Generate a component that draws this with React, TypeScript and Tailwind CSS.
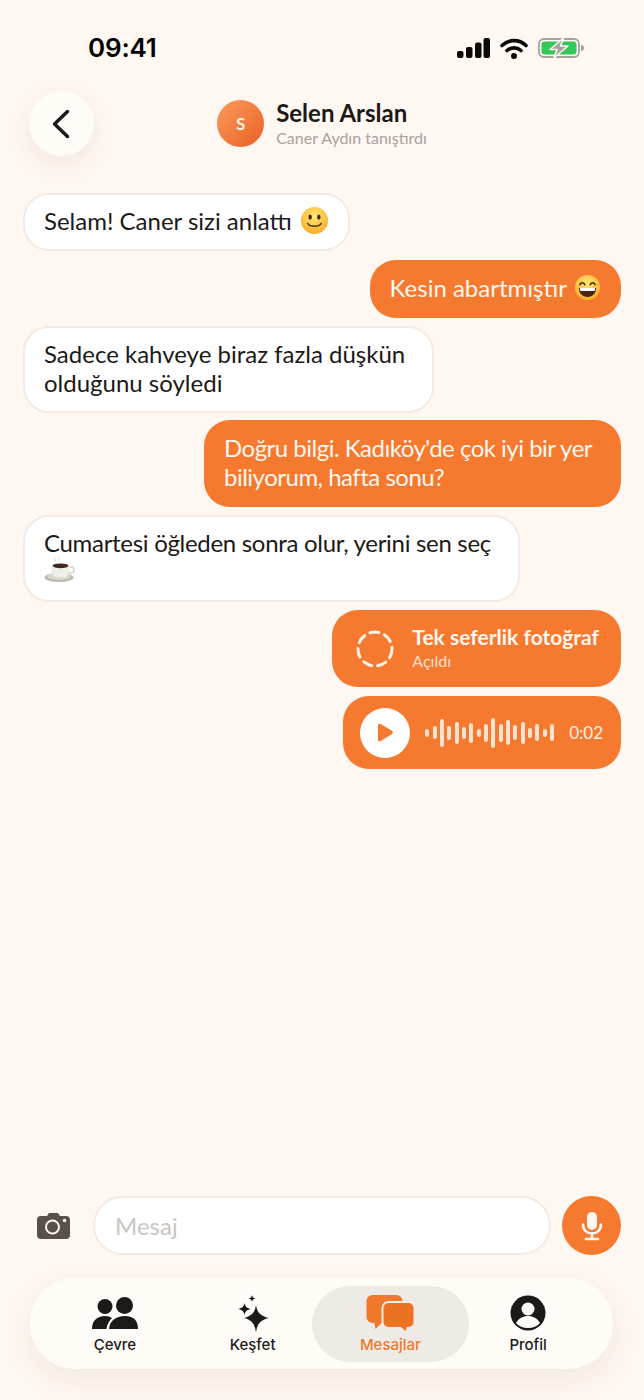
const WAVE = [8, 13, 28, 14, 22, 12, 20, 8, 18, 30, 18, 25, 15, 22, 10, 17, 8, 17];

function Smile({ size = 29 }: { size?: number }) {
  return (
    <svg width={size} height={size} viewBox="0 0 30 30" className="inline-block shrink-0 align-middle">
      <defs>
        <radialGradient id="smileFace" cx="50%" cy="35%" r="70%">
          <stop offset="0%" stopColor="#ffe873" />
          <stop offset="100%" stopColor="#f7a823" />
        </radialGradient>
      </defs>
      <circle cx="15" cy="15" r="14" fill="url(#smileFace)" />
      <ellipse cx="10.5" cy="11.5" rx="1.8" ry="2.6" fill="#3b2a1a" />
      <ellipse cx="19.5" cy="11.5" rx="1.8" ry="2.6" fill="#3b2a1a" />
      <path d="M8 18c2 4 12 4 14 0" fill="none" stroke="#5a3a1a" strokeWidth="1.5" strokeLinecap="round" />
    </svg>
  );
}

function Grin({ size = 27 }: { size?: number }) {
  return (
    <svg width={size} height={size} viewBox="0 0 30 30" className="inline-block shrink-0 align-middle">
      <defs>
        <radialGradient id="grinFace" cx="50%" cy="35%" r="70%">
          <stop offset="0%" stopColor="#ffe873" />
          <stop offset="100%" stopColor="#f7a823" />
        </radialGradient>
      </defs>
      <circle cx="15" cy="15" r="14" fill="url(#grinFace)" />
      <path d="M6.5 12c1-3 4.500-3 5.500 0M18 12c1-3 4.500-3 5.500 0" fill="none" stroke="#3b2a1a" strokeWidth="1.7" strokeLinecap="round" />
      <path d="M5.500 15.500h19c0 6-4 10-9.500 10s-9.500-4-9.500-10z" fill="#4a2410" />
      <path d="M6.500 15.500h17c0 1.500-.3 2.500-.7 3.500H7.200c-.4-1-.7-2-.7-3.500z" fill="#fff" />
    </svg>
  );
}

function Coffee() {
  return (
    <div className="h-[29px]">
      <svg width="31" height="26" viewBox="0 0 31 26" className="block">
        <path d="M11 1c-1.500 1.500 1.500 2.500 0 4M15 0c-1.500 1.500 1.500 2.500 0 4" fill="none" stroke="#e3e3e3" strokeWidth="1" />
        <ellipse cx="15" cy="20.500" rx="14.500" ry="4.500" fill="#b9b7ae" />
        <ellipse cx="15" cy="19.500" rx="12" ry="3.500" fill="#d8d6cd" />
        <path d="M7 8h19c0 6-1.500 11-5 12.500h-9C8.500 19 7 14 7 8z" fill="#efeee9" />
        <path d="M25.500 10h1.500a2.500 2.500 0 010 6h-2.500" fill="none" stroke="#d6d4cc" strokeWidth="1.600" />
        <ellipse cx="16.500" cy="8.500" rx="9.500" ry="3.300" fill="#f7f6f2" />
        <ellipse cx="16.500" cy="8.800" rx="7.800" ry="2.400" fill="#3f2a1d" />
      </svg>
    </div>
  );
}

function StatusBar() {
  return (
    <div className="flex h-[91px] items-start justify-between pl-[88px] pr-[59px] pt-[32px]">
      <span className="font-['Inter',sans-serif] text-[26px] font-semibold leading-[32px] tracking-[-0.2px] text-black">09:41</span>
      <div className="flex items-center gap-[10px] pt-[5px]">
        <svg width="33" height="21" viewBox="0 0 33 21" fill="#0c0a09">
          <rect x="0" y="13" width="6.500" height="7" rx="2" />
          <rect x="9" y="9" width="6.500" height="11" rx="2" />
          <rect x="18" y="4.500" width="6.500" height="15.500" rx="2" />
          <rect x="26.500" y="0" width="6.500" height="20" rx="2" />
        </svg>
        <svg width="28" height="21" viewBox="0 0 28 21" fill="none" stroke="#0c0a09" strokeWidth="3.600" strokeLinecap="round">
          <path d="M2 7.500c7-6.500 17-6.500 24 0" />
          <path d="M7 12.500c4-3.500 10-3.500 14 0" />
          <circle cx="14" cy="18" r="1.200" fill="#0c0a09" />
        </svg>
        <svg width="47" height="22" viewBox="0 0 47 22">
          <rect x="1" y="2" width="40" height="18" rx="5" fill="none" stroke="#a8a29e" strokeWidth="1.800" />
          <rect x="3.500" y="4.500" width="35" height="13" rx="3" fill="#34c759" />
          <path d="M43 8v6c2 0 3-1 3-3s-1-3-3-3z" fill="#a8a29e" />
          <path d="M25.500 1L12 12.500h7L16 21l14-12h-7.500z" fill="#a8a29e" stroke="#fff7f1" strokeWidth="1.600" strokeLinejoin="round" />
        </svg>
      </div>
    </div>
  );
}

function Header() {
  return (
    <div className="grid grid-cols-[65px_1fr_65px] items-center px-[29px]">
      <button className="flex h-[65px] w-[65px] items-center justify-center rounded-full bg-[#fffcf8] shadow-[0_8px_24px_rgba(90,60,30,0.08)]">
        <svg width="20" height="32" viewBox="0 0 20 32" fill="none" stroke="#1c1917" strokeWidth="3.500" strokeLinecap="round" strokeLinejoin="round">
          <path d="M15.500 3.500L2.500 16l13 12.500" />
        </svg>
      </button>
      <div className="flex items-center justify-center gap-[12px]">
        <div className="flex h-[47px] w-[47px] items-center justify-center rounded-full bg-gradient-to-br from-[#fb9a5c] to-[#e9601f] text-[17px] font-bold text-[#fff3e8]">
          S
        </div>
        <div>
          <div className="text-[24px] font-bold leading-[28px] text-[#1c1917]">Selen Arslan</div>
          <div className="mt-[1px] text-[16px] leading-[20px] text-[#a8a29e]">Caner Aydın tanıştırdı</div>
        </div>
      </div>
      <div />
    </div>
  );
}

function Incoming({ children, className = "" }: { children: React.ReactNode; className?: string }) {
  return (
    <div className={`self-start rounded-[26px] border-2 border-[#f5ebe3] bg-white px-[19px] pb-[14px] pt-[11px] text-[24px] leading-[29px] text-[#1c1917] ${className}`}>
      {children}
    </div>
  );
}

function Outgoing({ children, className = "" }: { children: React.ReactNode; className?: string }) {
  return (
    <div className={`self-end rounded-[26px] bg-[#f57a30] px-[20px] pb-[16px] pt-[13px] text-[24px] leading-[29px] text-[#fff7f0] ${className}`}>
      {children}
    </div>
  );
}

function Messages() {
  return (
    <div className="flex flex-col gap-[8px] px-[23px] pt-[37px]">
      <Incoming>
        <span className="flex items-center gap-[8px]">
          Selam! Caner sizi anlattı <Smile />
        </span>
      </Incoming>
      <Outgoing className="mt-[1px]">
        <span className="flex items-center gap-[7px]">
          Kesin abartmıştır <Grin />
        </span>
      </Outgoing>
      <Incoming>
        <div className="w-[369px]">Sadece kahveye biraz fazla düşkün olduğunu söyledi</div>
      </Incoming>
      <Outgoing className="-mt-[1px]">
        <div className="w-[377px] tracking-[-0.5px]">Doğru bilgi. Kadıköy'de çok iyi bir yer biliyorum, hafta sonu?</div>
      </Outgoing>
      <Incoming>
        <div className="w-[455px] tracking-[-0.3px]">
          Cumartesi öğleden sonra olur, yerini sen seç
          <Coffee />
        </div>
      </Incoming>
      <div className="flex h-[77px] items-center gap-[18px] self-end rounded-[26px] bg-[#f57a30] pl-[24px] pr-[22px]">
        <svg width="38" height="38" viewBox="0 0 38 38" fill="none" stroke="#fff3e8" strokeWidth="3" strokeDasharray="9 5.900" strokeLinecap="round">
          <circle cx="19" cy="19" r="17" />
        </svg>
        <div className="pb-[2px]">
          <div className="text-[21px] font-bold leading-[26px] text-[#fff7f0]">Tek seferlik fotoğraf</div>
          <div className="text-[16px] leading-[22px] text-[#fde0c8]">Açıldı</div>
        </div>
      </div>
      <div className="mt-[1px] flex h-[73px] items-center self-end rounded-[26px] bg-[#f57a30] pl-[17px] pr-[18px]">
        <div className="flex h-[50px] w-[50px] items-center justify-center rounded-full bg-white">
          <svg width="20" height="22" viewBox="0 0 20 22" fill="#f57a30">
            <path d="M3 3.500c0-1.500 1.500-2.300 2.800-1.600l11 6.800c1.300.8 1.300 2.700 0 3.500l-11 6.800c-1.300.7-2.800-.1-2.800-1.600z" />
          </svg>
        </div>
        <div className="ml-[15px] flex items-center gap-[3.350px]">
          {WAVE.map((h, i) => (
            <span key={i} className="w-[4px] rounded-full bg-[#fde3cf]" style={{ height: h }} />
          ))}
        </div>
        <span className="ml-[15px] text-[17px] text-[#fff0e4]">0:02</span>
      </div>
    </div>
  );
}

function Composer() {
  return (
    <div className="flex items-center pl-[37px] pr-[23px]">
      <svg width="33" height="27" viewBox="0 0 33 27" className="shrink-0">
        <path d="M4 4h6l2-3h9l2 3h6a4 4 0 014 4v15a4 4 0 01-4 4H4a4 4 0 01-4-4V8a4 4 0 014-4z" fill="#57504b" />
        <circle cx="15.500" cy="15" r="6.500" fill="none" stroke="#fff7f1" strokeWidth="2" />
        <circle cx="27.500" cy="8.500" r="1.800" fill="#fff7f1" />
      </svg>
      <div className="ml-[23px] flex h-[59px] flex-1 items-center rounded-full border-2 border-[#f5ebe3] bg-white pl-[20px] text-[24px] text-[#c9c7c4]">
        Mesaj
      </div>
      <div className="ml-[11px] flex h-[59px] w-[59px] shrink-0 items-center justify-center rounded-full bg-[#f57a30]">
        <svg width="22" height="30" viewBox="0 0 22 30" fill="none" stroke="#fff7f1" strokeWidth="2.600" strokeLinecap="round">
          <rect x="6" y="1" width="10" height="18" rx="5" fill="#fff7f1" stroke="none" />
          <path d="M2 13.500c0 5.500 4 9 9 9s9-3.500 9-9M11 22.500v5M5 28h12" />
        </svg>
      </div>
    </div>
  );
}

function NavBar() {
  const labelClass = "text-[15px] font-medium leading-[18px] font-['Inter',sans-serif]";
  return (
    <div className="ml-[30px] mr-[31px] mt-[23px] grid h-[91px] grid-cols-4 items-center rounded-[45px] bg-[#fffcf8] px-[16px] shadow-[0_10px_30px_rgba(90,60,30,0.08)]">
      <div className="flex flex-col items-center pt-[3px] text-[#1c1917]">
        <svg width="46" height="33" viewBox="0 0 46 33" fill="#1c1917" className="mb-[6px]">
          <ellipse cx="13" cy="9.500" rx="7.500" ry="7.500" />
          <ellipse cx="32.500" cy="8.500" rx="8.500" ry="8.500" />
          <path d="M0 32c0-8 5-13 13-13 3 0 5 .7 7 2-3 3-5 6.500-5.500 11z" />
          <path d="M17 32c.5-8 7-13 16-13s13 5 13 13z" />
        </svg>
        <span className={labelClass}>Çevre</span>
      </div>
      <div className="flex flex-col items-center pt-[1px] text-[#1c1917]">
        <svg width="34" height="40" viewBox="0 0 34 40" fill="#1c1917" className="mb-[2px]">
          <path d="M20 11c1 7 4 11 13 13-9 2-12 6-13 15-1-9-4-13-12-15 8-2 11-6 12-13z" />
          <path d="M8.500 9c.5 3 2 5 6 6-4 1-5.500 3-6 6-.5-3-2-5-6-6 4-1 5.500-3 6-6z" />
          <path d="M16 1c.3 2 1 3 3.500 3.500-2.500.5-3.200 1.500-3.500 3.500-.3-2-1-3-3.500-3.500 2.500-.5 3.200-1.500 3.500-3.500z" />
        </svg>
        <span className={labelClass}>Keşfet</span>
      </div>
      <div className="flex h-[76px] w-[157px] flex-col items-center justify-center justify-self-center rounded-[38px] bg-[#eeebe6] pt-[1px] text-[#f0782c]">
        <svg width="49" height="38" viewBox="0 0 48 38" fill="#f0782c" className="mb-[3px]">
          <path d="M6 0h24a6 6 0 016 6v16a6 6 0 01-6 6H15l-6 6-1-6H6a6 6 0 01-6-6V6a6 6 0 016-6z" />
          <path d="M22 7h20a6 6 0 016 6v14a6 6 0 01-6 6h-1l-1 5-6-5H22a6 6 0 01-6-6V13a6 6 0 016-6z" fill="#ec7323" stroke="#eeebe6" strokeWidth="2" />
        </svg>
        <span className={labelClass}>Mesajlar</span>
      </div>
      <div className="flex flex-col items-center pt-[2px] text-[#1c1917]">
        <svg width="36" height="36" viewBox="0 0 36 36" className="mb-[5px]">
          <circle cx="18" cy="18" r="17.500" fill="#1c1917" />
          <circle cx="18" cy="14" r="6.500" fill="#fffcf8" />
          <path d="M6 28c3-5 7-7 12-7s9 2 12 7c-3 3.500-7 5-12 5s-9-1.500-12-5z" fill="#fffcf8" />
        </svg>
        <span className={labelClass}>Profil</span>
      </div>
    </div>
  );
}

export default function App() {
  return (
    <div className="flex h-[1400px] flex-col overflow-hidden bg-[#fff7f1] font-['Lato',sans-serif]">
      <StatusBar />
      <Header />
      <Messages />
      <div className="flex-1" />
      <Composer />
      <NavBar />
      <div className="h-[31px]" />
    </div>
  );
}
